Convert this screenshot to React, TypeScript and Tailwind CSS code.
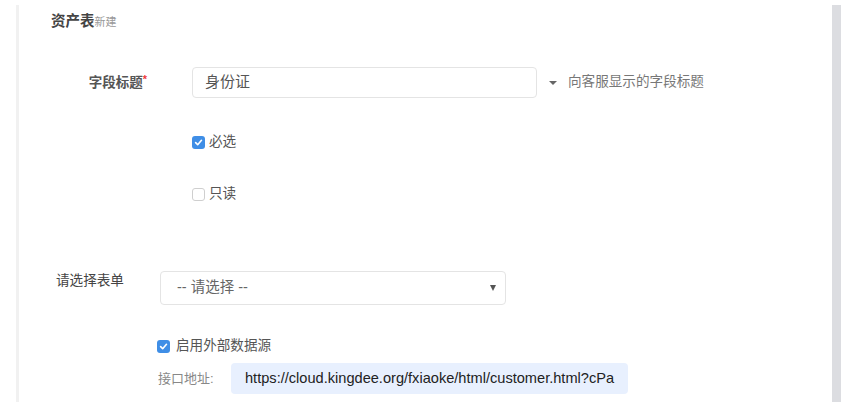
import React from 'react'

const CJK = "font-['Liberation_Sans','Noto_Sans_CJK_SC',sans-serif]"

function Checkbox({ checked }: { checked: boolean }) {
  if (checked) {
    return (
      <span className="flex h-[13px] w-[13px] shrink-0 items-center justify-center rounded-[3px] bg-[#3f8ee6]">
        <svg width="9" height="9" viewBox="0 0 10 10" fill="none">
          <path d="M1.8 5.2 L4.1 7.4 L8.3 2.6" stroke="white" strokeWidth="1.8" strokeLinecap="round" strokeLinejoin="round" />
        </svg>
      </span>
    )
  }
  return <span className="h-[13px] w-[13px] shrink-0 rounded-[3px] border border-[#cfcfcf] bg-white" />
}

function Caret({ w, h, color }: { w: number; h: number; color: string }) {
  return (
    <svg width={w} height={h} viewBox={`0 0 ${w} ${h}`} className="shrink-0">
      <path d={`M0 0 L${w} 0 L${w / 2} ${h} Z`} fill={color} />
    </svg>
  )
}

export default function App() {
  return (
    <div className={`h-[419px] w-[841px] bg-white pt-[5px] ${CJK}`}>
      <div className="ml-[16px] flex h-[397px]">
        <div className="flex-1 border-l-[3px] border-[#f1f1f1]">
          {/* Title */}
          <div className="ml-[32px] mt-[6px] flex items-baseline leading-[20px]">
            <span className="text-[14.5px] font-bold text-[#444]">资产表</span>
            <span className="text-[11px] text-[#999]">新建</span>
          </div>

          {/* 字段标题 */}
          <div className="mt-[35px] flex items-center">
            <div className="w-[128px] text-right text-[13.5px] font-bold leading-[20px] text-[#555]">
              字段标题<span className="relative top-[-4px] text-[11px] text-[#ef3b3b]">*</span>
            </div>
            <div className="ml-[45px] flex h-[31px] w-[345px] items-center rounded-[4px] border border-[#e4e4e4] pl-[12px] text-[15px] text-[#555]">
              身份证
            </div>
            <span className="ml-[12px] mt-[1px]">
              <Caret w={8} h={4} color="#666" />
            </span>
            <span className="ml-[11px] text-[13.6px] text-[#777]">向客服显示的字段标题</span>
          </div>

          {/* 必选 */}
          <div className="ml-[173px] mt-[34px] flex h-[20px] items-center gap-[4px] text-[13.6px] text-[#555]">
            <Checkbox checked />
            <span>必选</span>
          </div>

          {/* 只读 */}
          <div className="ml-[173px] mt-[32px] flex h-[20px] items-center gap-[4px] text-[13.6px] text-[#555]">
            <Checkbox checked={false} />
            <span>只读</span>
          </div>

          {/* 请选择表单 */}
          <div className="ml-[37px] mt-[67px] flex items-start">
            <div className="w-[104px] text-[13.6px] leading-[20px] text-[#444]">请选择表单</div>
            <div className="flex h-[34px] w-[346px] items-center justify-between rounded-[4px] border border-[#e4e4e4] pl-[16px] pr-[9px] text-[14.5px] text-[#666]">
              <span>-- 请选择 --</span>
              <Caret w={6} h={6} color="#555" />
            </div>
          </div>

          {/* 启用外部数据源 */}
          <div className="ml-[138px] mt-[31px] flex h-[20px] items-center gap-[6px] text-[13.6px] text-[#555]">
            <Checkbox checked />
            <span>启用外部数据源</span>
          </div>

          {/* 接口地址 */}
          <div className="ml-[139px] mt-[7px] flex items-center">
            <div className="w-[73px] text-[13px] text-[#888]">接口地址:</div>
            <div className="flex h-[31px] w-[397px] items-center overflow-hidden whitespace-nowrap rounded-[4px] bg-[#e8f0fe] pl-[14px] font-['Liberation_Sans',sans-serif] text-[14.6px] text-[#222]">
              https://cloud.kingdee.org/fxiaoke/html/customer.html?cPa
            </div>
          </div>
        </div>
        <div className="w-[9px] bg-[#dcdde1]" />
      </div>
    </div>
  )
}
